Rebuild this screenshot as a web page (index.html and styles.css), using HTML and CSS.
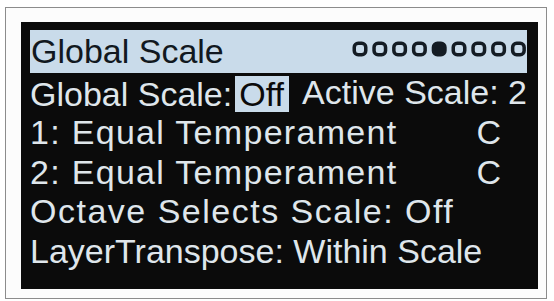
FILE: index.html
```html
<!DOCTYPE html>
<html>
<head>
<meta charset="utf-8">
<link rel="stylesheet" href="styles.css">
</head>
<body>
<div class="frame">
  <div class="screen">
    <div class="header">
      <span class="title">Global Scale</span>
      <svg class="dots" width="175" height="18" viewBox="0 0 175 18">
        <g fill="none" stroke="#141c24" stroke-width="3.5">
          <rect x="2.25" y="2.25" width="11.5" height="11.5" rx="4"/>
          <rect x="22.05" y="2.25" width="11.5" height="11.5" rx="4"/>
          <rect x="41.85" y="2.25" width="11.5" height="11.5" rx="4"/>
          <rect x="61.65" y="2.25" width="11.5" height="11.5" rx="4"/>
          <rect x="81.45" y="2.25" width="11.5" height="11.5" rx="4" fill="#141c24"/>
          <rect x="101.25" y="2.25" width="11.5" height="11.5" rx="4"/>
          <rect x="121.05" y="2.25" width="11.5" height="11.5" rx="4"/>
          <rect x="140.85" y="2.25" width="11.5" height="11.5" rx="4"/>
          <rect x="160.65" y="2.25" width="11.5" height="11.5" rx="4"/>
        </g>
      </svg>
    </div>
    <div class="row r1">
      <span class="lbl">Global Scale:<span class="sel">Off</span></span>
      <span class="lbl">Active Scale: 2</span>
    </div>
    <div class="row r2"><span class="lbl">1: Equal Temperament</span><span class="key">C</span></div>
    <div class="row r3"><span class="lbl">2: Equal Temperament</span><span class="key">C</span></div>
    <div class="row r4"><span class="lbl">Octave Selects Scale: Off</span></div>
    <div class="row r5"><span class="lbl">LayerTranspose: Within Scale</span></div>
  </div>
</div>
</body>
</html>
```
FILE: styles.css
```css
html, body {
  margin: 0;
  padding: 0;
  background: #ffffff;
}
body {
  width: 554px;
  height: 301px;
  overflow: hidden;
  font-family: "Liberation Sans", Arial, sans-serif;
}
.frame {
  box-sizing: border-box;
  margin: 7px 0 0 5px;
  width: 542px;
  height: 292px;
  border: 1px solid #8c8c8c;
  padding: 14px 8px 9px 15px;
  background: #fcfcfc;
}
.screen {
  box-sizing: border-box;
  width: 517px;
  height: 267px;
  background: #0b0b0b;
  padding: 8px 11px 0 9px;
}
.header {
  height: 43px;
  background: #c9dbea;
  display: flex;
  align-items: center;
  justify-content: space-between;
  padding: 0 0 0 1px;
  color: #111820;
}
.title {
  font-size: 34px;
  line-height: 43px;
}
.dots {
  display: block;
  margin-top: -3px;
}
.row {
  display: flex;
  height: 39.75px;
  line-height: 39.75px;
  font-size: 34px;
  color: #dfe6eb;
  white-space: nowrap;
}
.r1 {
  justify-content: space-between;
}
.r2, .r3 {
  letter-spacing: 1.3px;
}
.r4 {
  letter-spacing: 1.5px;
}
.r5 {
  letter-spacing: 0;
}
.sel {
  display: inline-block;
  background: #c9dbea;
  color: #0b0b0b;
  margin-left: 3px;
  padding: 0 5px 0 4px;
  line-height: 36px;
  margin-top: 3px;
}
.key {
  margin-left: auto;
  margin-right: 26px;
  letter-spacing: 0;
}
```
